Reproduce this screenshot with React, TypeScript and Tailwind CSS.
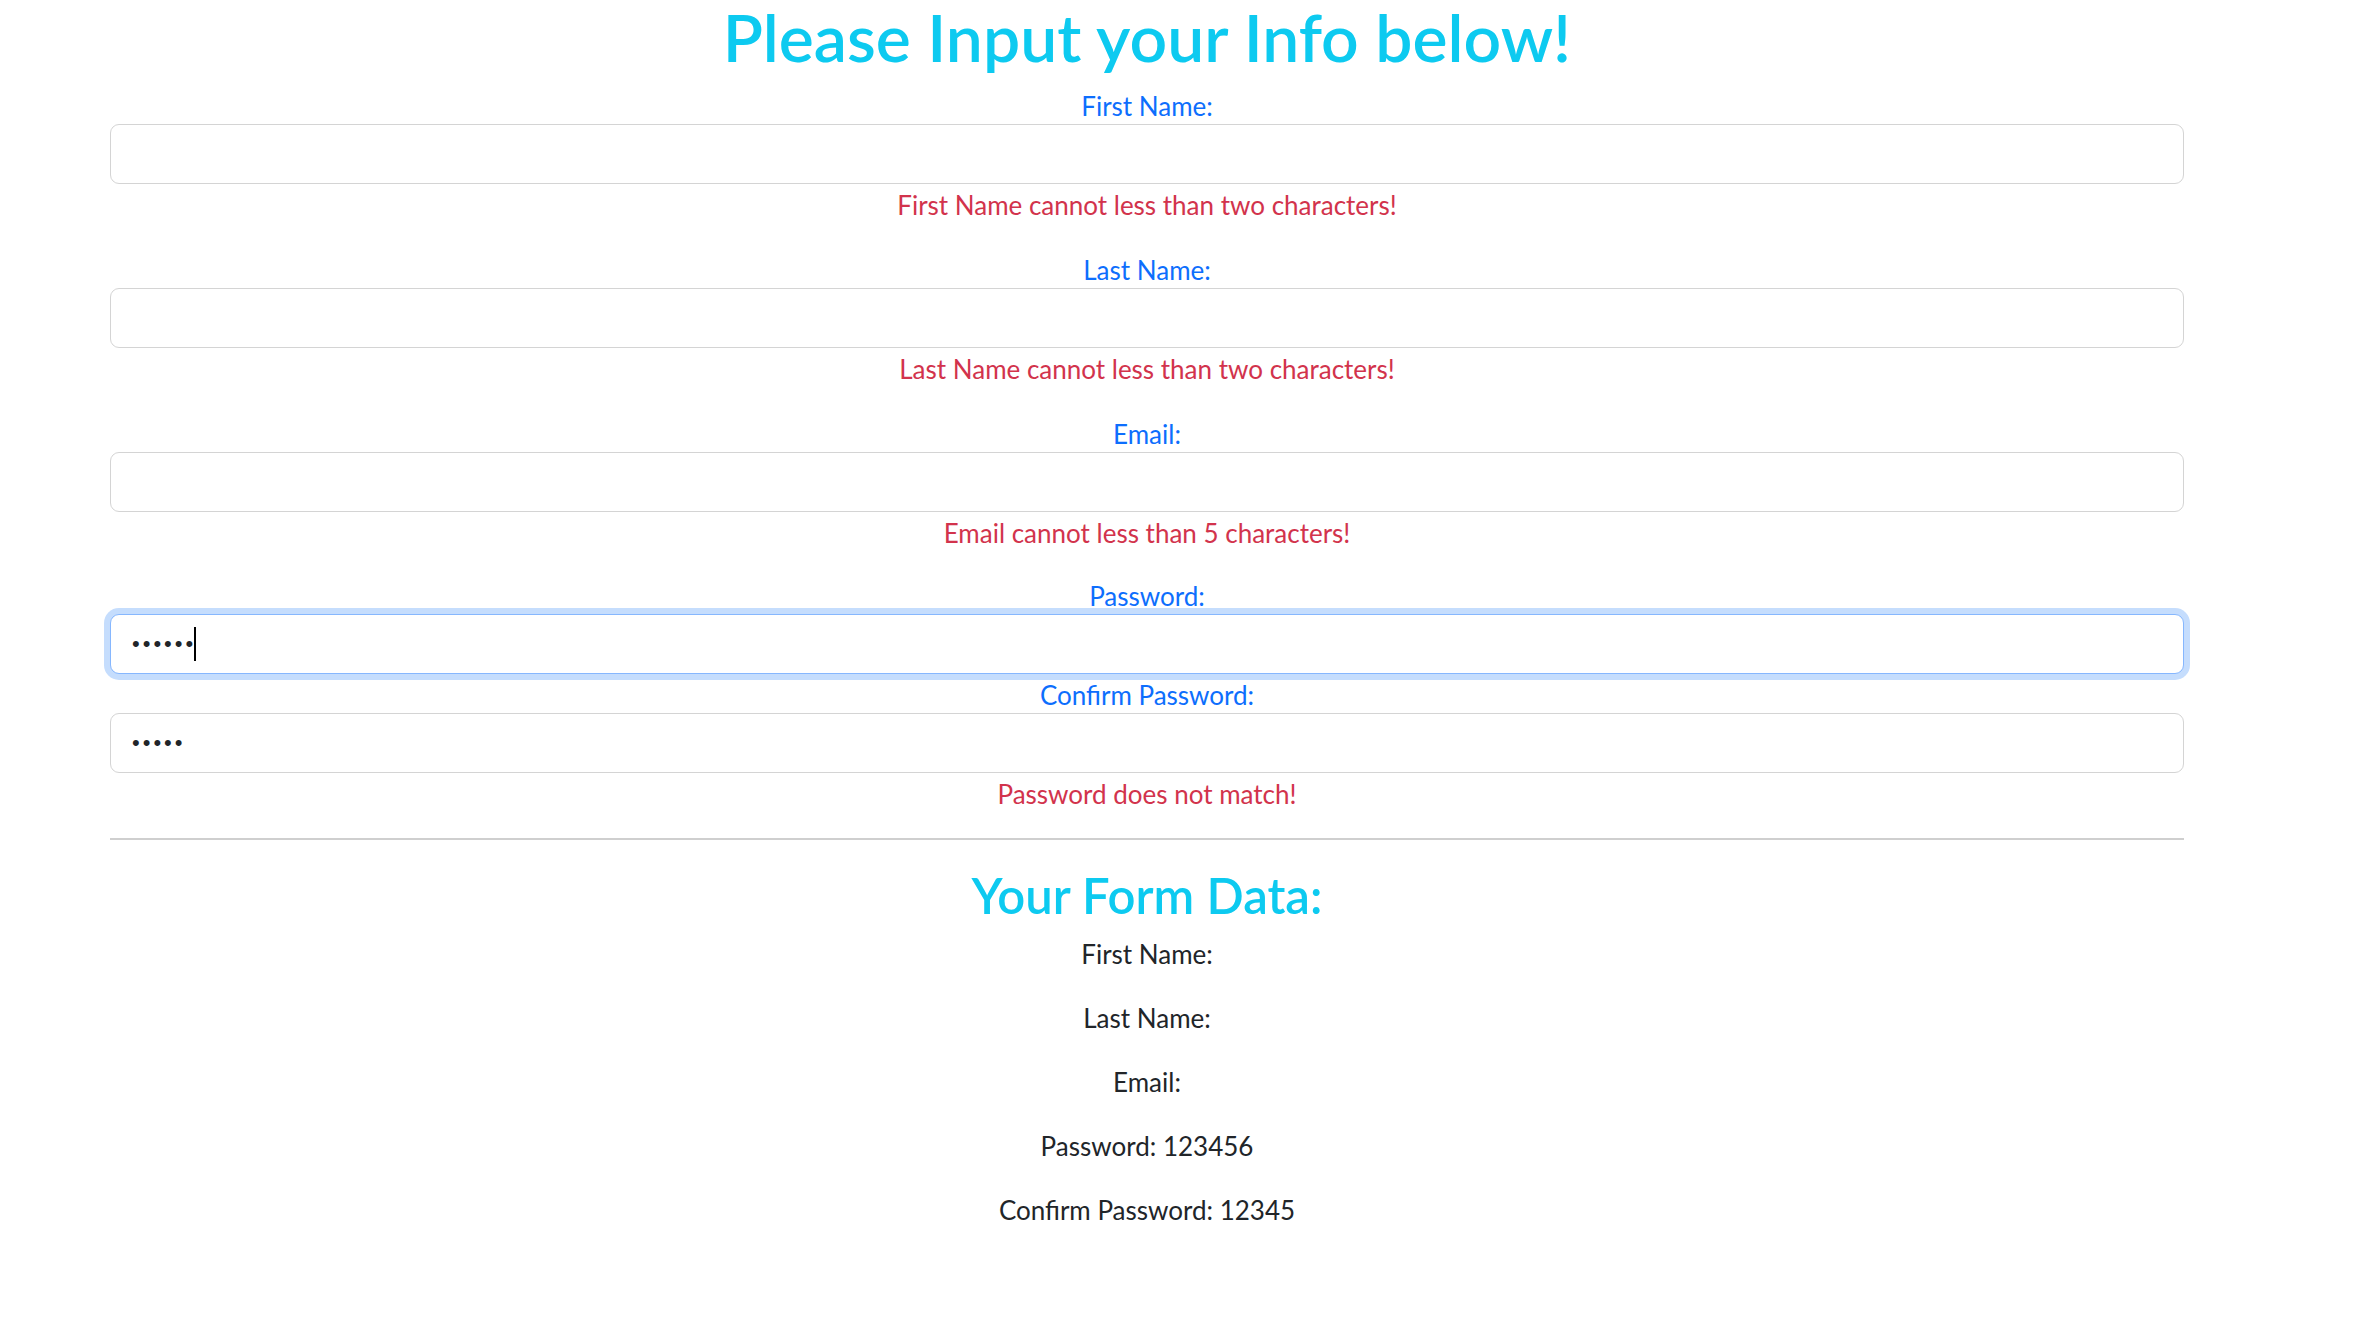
import React from "react";

const FONT = { fontFamily: '"Segoe UI", Lato, "Noto Sans", sans-serif' };

type FieldProps = {
  label: string;
  error?: string;
  className?: string;
  children: React.ReactNode;
};

const Field = ({ label, error, className, children }: FieldProps) => (
  <div className={className ?? (error ? "mb-[29px]" : "mb-[3px]")}>
    <label className="block h-[36px] leading-[36px] text-[26px] text-[#0d6efd]">{label}</label>
    {children}
    {error && (
      <div className="mt-[3px] h-[36px] leading-[36px] text-[26px] text-[#d2334c]">{error}</div>
    )}
  </div>
);

const TextInput = () => (
  <input
    type="text"
    className="block w-full h-[60px] rounded-[9px] border-[1.5px] border-[#d4d4d4] bg-white px-[20px] text-[24px] outline-none"
  />
);

const PasswordBox = ({ dots, focused }: { dots: number; focused?: boolean }) => (
  <div
    className={
      focused
        ? "flex items-center w-full h-[60px] rounded-[9px] border-[1.5px] border-[#86b7fe] bg-white px-[21px] shadow-[0_0_0_6px_#c5ddfd] text-left"
        : "flex items-center w-full h-[60px] rounded-[9px] border-[1.5px] border-[#d4d4d4] bg-white px-[21px] text-left"
    }
  >
    <span className="text-[22px] tracking-[3px] text-[#212529] leading-none" style={{ fontFamily: "Arial, sans-serif" }}>
      {"•".repeat(dots)}
    </span>
    {focused && <span className="inline-block w-[2px] h-[34px] bg-black -ml-[2px]" />}
  </div>
);

export default function App() {
  return (
    <div className="min-h-screen bg-white text-[#212529]" style={FONT}>
      <div className="ml-[110px] w-[2074px] text-center">
        <h1 className="text-[66px] font-semibold leading-[74px] text-[#0dcaf0] mb-[14px]">
          Please Input your Info below!
        </h1>

        <Field label="First Name:" error="First Name cannot less than two characters!">
          <TextInput />
        </Field>
        <Field label="Last Name:" error="Last Name cannot less than two characters!">
          <TextInput />
        </Field>
        <Field label="Email:" error="Email cannot less than 5 characters!" className="mb-[27px]">
          <TextInput />
        </Field>
        <Field label="Password:" className="mb-[3px]">
          <PasswordBox dots={6} focused />
        </Field>
        <Field label="Confirm Password:" error="Password does not match!" className="mb-[28px]">
          <PasswordBox dots={5} />
        </Field>

        <hr className="border-0 h-[2px] bg-[#cfcfcf] mt-[-2px] mb-[26px]" />

        <h2 className="text-[49px] font-semibold leading-[58px] text-[#0dcaf0] mb-[12px]">Your Form Data:</h2>
        <div className="text-[26px] leading-[36px] text-[#212529]">
          <p className="mb-[28px]">First Name: </p>
          <p className="mb-[28px]">Last Name: </p>
          <p className="mb-[28px]">Email: </p>
          <p className="mb-[28px]">Password: 123456</p>
          <p className="mb-[28px]">Confirm Password: 12345</p>
        </div>
      </div>
    </div>
  );
}
